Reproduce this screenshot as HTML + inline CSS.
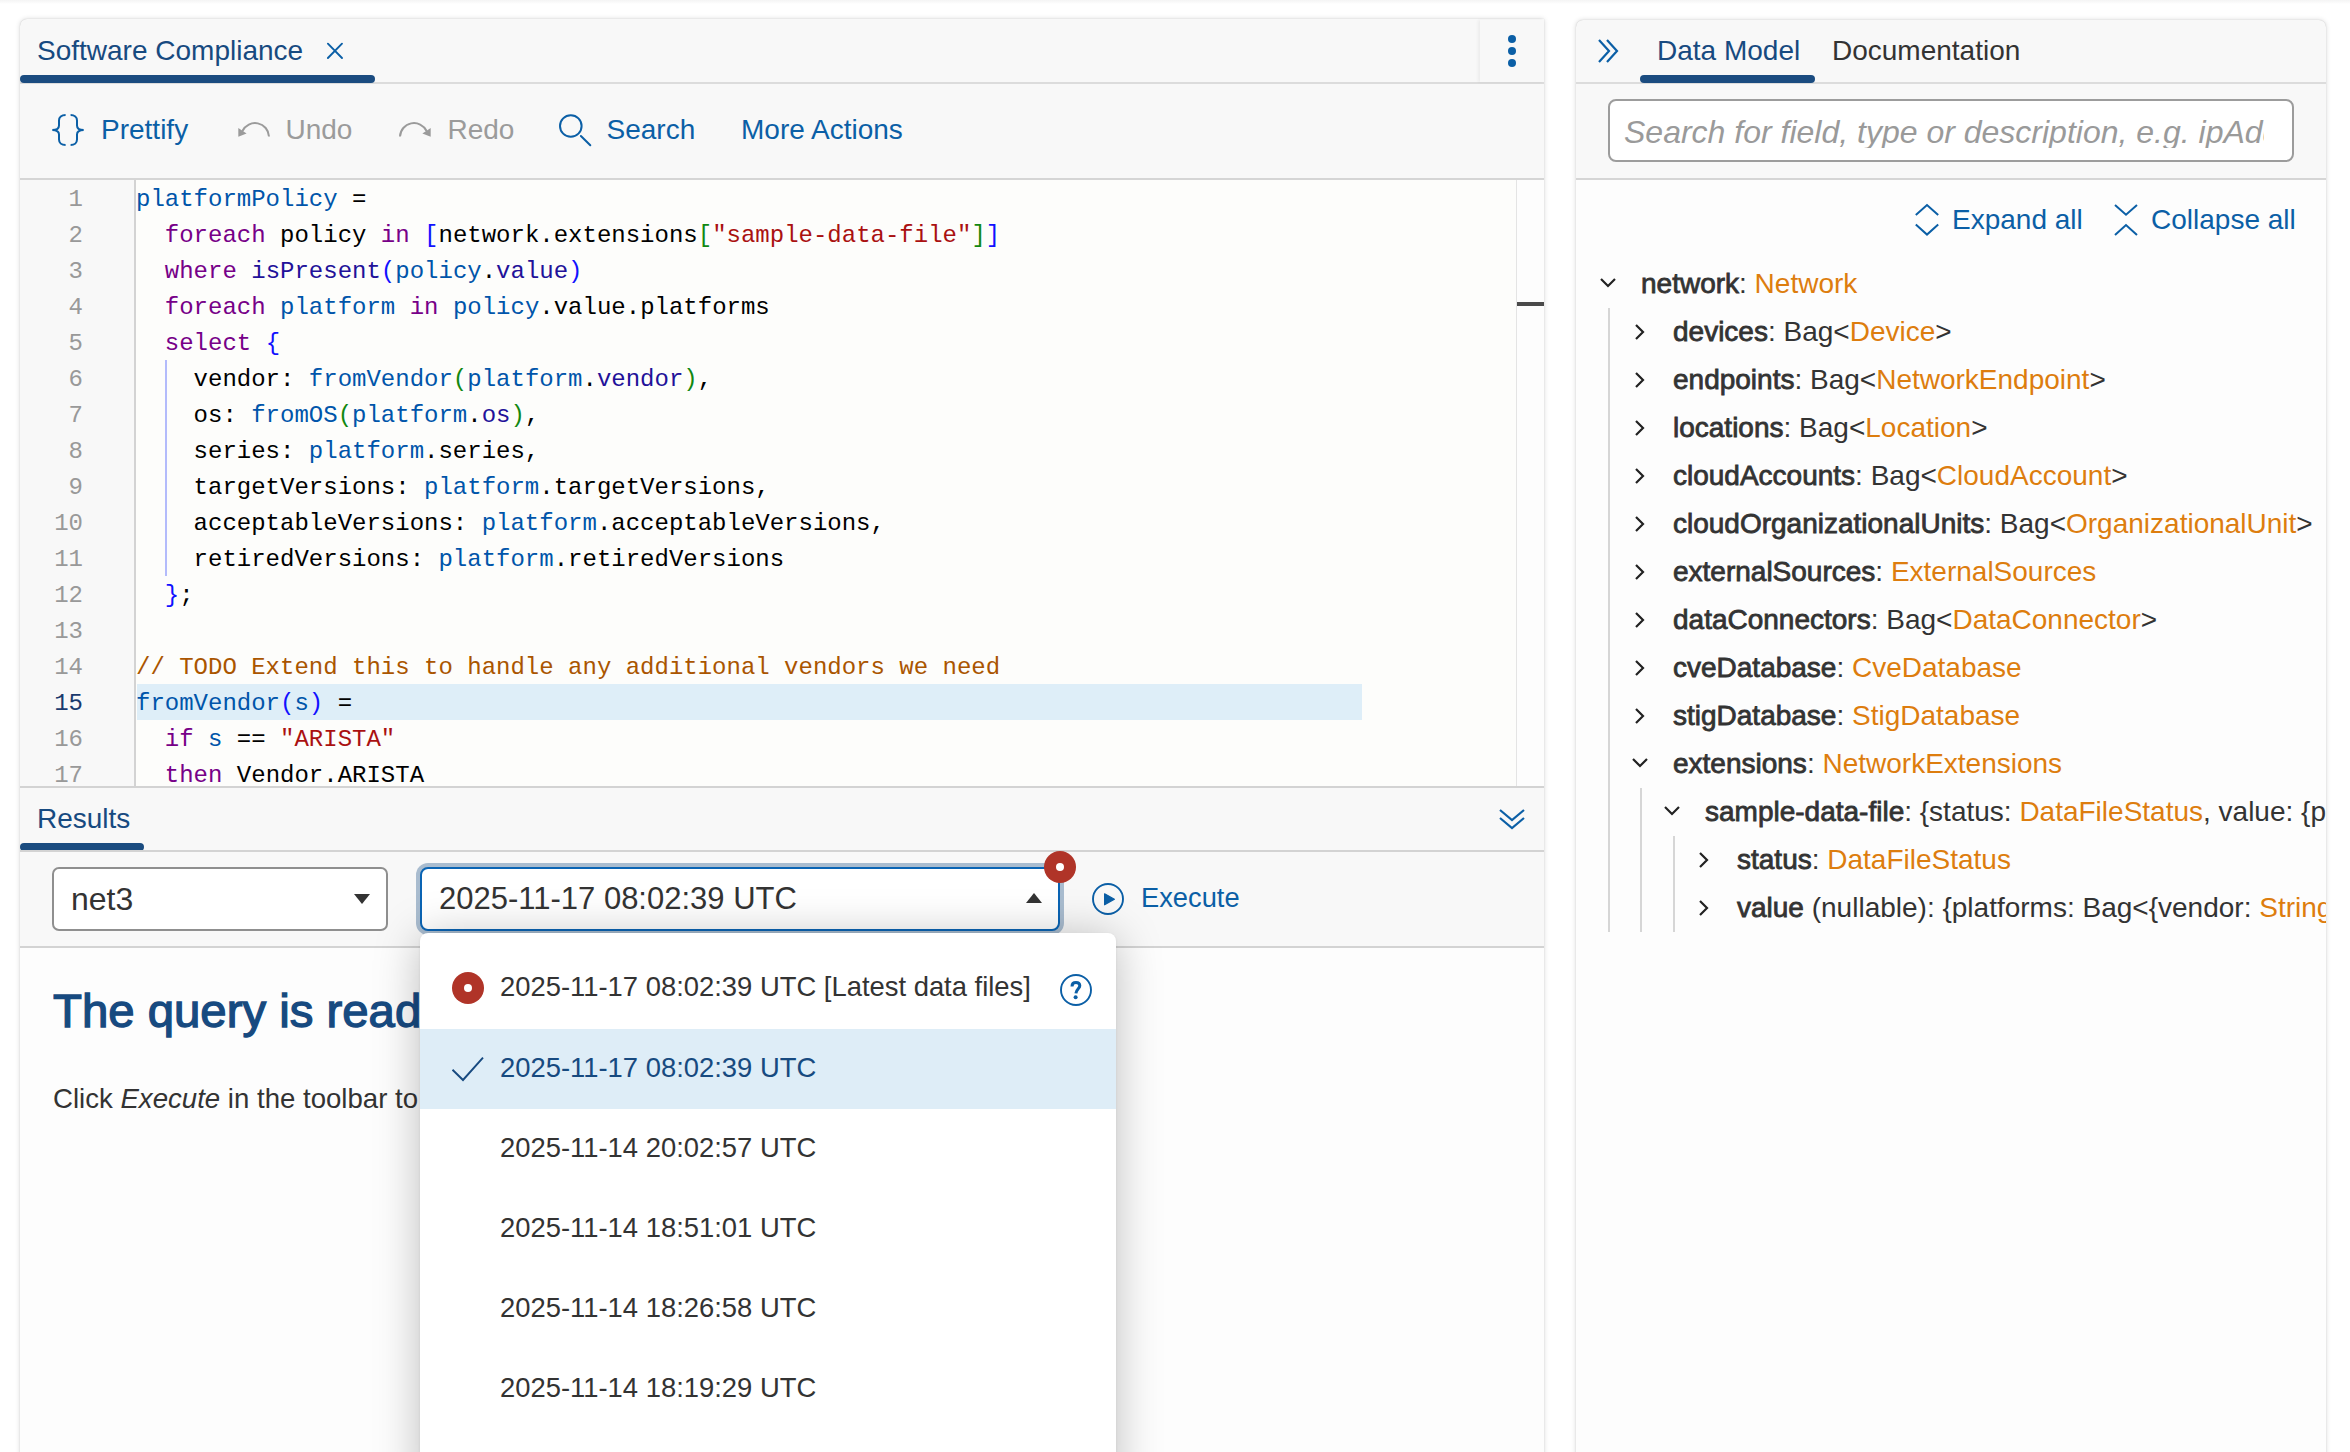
<!DOCTYPE html>
<html><head><meta charset="utf-8">
<style>
*{box-sizing:border-box;margin:0;padding:0}
html,body{width:2350px;height:1452px;overflow:hidden;background:#fff;font-family:"Liberation Sans",sans-serif;}
.abs{position:absolute}
.t{position:absolute;white-space:pre;line-height:28px;font-size:28px}
.panel{position:absolute;background:#f8f8f8;border-radius:7px 7px 0 0;box-shadow:0 0 5px rgba(0,0,0,.16),0 0 1px rgba(0,0,0,.2)}
.hl{position:absolute;background:#d8d8d8}
.blue{color:#0b5fa6}
.dblue{color:#174a80}
.gray{color:#9b9b9b}
.dark{color:#333}
.ul{position:absolute;height:8px;background:#1b4c80;border-radius:4px}
/* code */
.code{position:absolute;left:136px;top:182px;font-family:"Liberation Mono",monospace;font-size:24px;line-height:36px;color:#000;white-space:pre}
.gut{position:absolute;left:20px;top:182px;width:63px;text-align:right;font-family:"Liberation Mono",monospace;font-size:24px;line-height:36px;color:#999;white-space:pre}
.k{color:#708}.d{color:#05a}.a{color:#219}.s{color:#a11}.c{color:#a50}.b1{color:#11f}.b2{color:#181}
/* tree */
.tr{position:absolute;white-space:pre;font-size:28px;line-height:28px;color:#333}
.tr b{font-weight:400;-webkit-text-stroke:0.8px #333}
.tr i{font-style:normal;color:#dd7d0e}
.menu .it{position:absolute;left:500px;white-space:pre;font-size:27.4px;line-height:28px;color:#333}
</style></head><body>

<div class="abs" style="left:0;top:0;width:2350px;height:4px;background:linear-gradient(#f4f4f4,#fafafa 60%,#fff)"></div>
<!-- LEFT PANEL -->
<div class="panel" style="left:20px;top:19px;width:1524px;height:1440px;border-top-right-radius:0"></div>
<!-- header border -->
<div class="hl" style="left:20px;top:82px;width:1524px;height:2px;background:#dcdcdc"></div>
<div class="t dblue" style="left:37px;top:37px;">Software Compliance</div>
<svg class="abs" style="left:325px;top:41px" width="20" height="20" viewBox="0 0 20 20"><path d="M2.9 2.7L17 17M17 2.7L2.9 17" stroke="#0b5fa6" stroke-width="1.9" stroke-linecap="round" fill="none"/></svg>
<div class="ul" style="left:20px;top:75px;width:355px"></div>
<!-- kebab -->
<div class="abs" style="left:1480px;top:20px;width:64px;height:62px;background:#f8f8f8;box-shadow:-2px 0 3px rgba(0,0,0,.05);"></div>
<div class="abs" style="left:1508px;top:35px;width:8px;height:8px;border-radius:50%;background:#0b5fa6"></div>
<div class="abs" style="left:1508px;top:47px;width:8px;height:8px;border-radius:50%;background:#0b5fa6"></div>
<div class="abs" style="left:1508px;top:59px;width:8px;height:8px;border-radius:50%;background:#0b5fa6"></div>

<!-- toolbar -->
<svg class="abs" style="left:50px;top:112px" width="36" height="36" viewBox="0 0 36 36"><path d="M15.6 3 C11.5 3 9 5.3 9 8.5 V13.5 C9 16 7 18 2.3 18 C7 18 9 20 9 22.5 V27.5 C9 30.7 11.5 33 15.6 33 M20.6 3 C24.5 3 27 5.3 27 8.5 V13.5 C27 16 29 18 33.7 18 C29 18 27 20 27 22.5 V27.5 C27 30.7 24.5 33 20.6 33" stroke="#0b5fa6" stroke-width="2" fill="none"/></svg>
<div class="t blue" style="left:101px;top:116px;">Prettify</div>
<svg class="abs" style="left:236px;top:118px" width="36" height="22" viewBox="0 0 36 22"><path d="M33 18.5 A14 14 0 0 0 6.4 13" stroke="#9b9b9b" stroke-width="2" fill="none"/><path d="M2.3 10 L2.3 18.8 L10.6 15.4 Z" fill="#9b9b9b"/></svg>
<div class="t gray" style="left:285.5px;top:116px;">Undo</div>
<svg class="abs" style="left:397px;top:118px;transform:scaleX(-1)" width="36" height="22" viewBox="0 0 36 22"><path d="M33 18.5 A14 14 0 0 0 6.4 13" stroke="#9b9b9b" stroke-width="2" fill="none"/><path d="M2.3 10 L2.3 18.8 L10.6 15.4 Z" fill="#9b9b9b"/></svg>
<div class="t gray" style="left:447.5px;top:116px;">Redo</div>
<svg class="abs" style="left:557px;top:112px" width="36" height="36" viewBox="0 0 36 36"><circle cx="13.8" cy="14" r="10.8" stroke="#0b5fa6" stroke-width="2" fill="none"/><path d="M23.9 24 L33.3 33.3" stroke="#0b5fa6" stroke-width="2" stroke-linecap="round"/></svg>
<div class="t blue" style="left:606.5px;top:116px;">Search</div>
<div class="t blue" style="left:741px;top:116px;">More Actions</div>
<div class="hl" style="left:20px;top:178px;width:1524px;height:2px;background:#d5d5d5"></div>

<!-- editor -->
<div class="abs" style="left:20px;top:180px;width:114px;height:606px;background:#f8f8f8"></div>
<div class="abs" style="left:134px;top:180px;width:2px;height:606px;background:#d3d3d3"></div>
<div class="abs" style="left:136px;top:180px;width:1380px;height:606px;background:#fdfdfb"></div>
<div class="abs" style="left:1516px;top:180px;width:28px;height:606px;background:#fdfdfd;border-left:1px solid #e4e4e4"></div>
<div class="abs" style="left:1517px;top:302px;width:27px;height:4px;background:#4a4a4a"></div>
<div class="abs" style="left:137px;top:684px;width:1225px;height:36px;background:#deeef8"></div>
<div class="abs" style="left:165px;top:360px;width:2px;height:216px;background:#b3bbfb"></div>
<div class="abs" style="left:0;top:180px;width:1544px;height:606px;overflow:hidden">
<div class="gut" style="left:20px;top:2px">1
2
3
4
5
6
7
8
9
10
11
12
13
14
<span style="color:#1a3a6e">15</span>
16
17</div>
<div class="code" style="top:2px"><span class="d">platformPolicy</span> =
  <span class="k">foreach</span> policy <span class="k">in</span> <span class="b1">[</span>network.extensions<span class="b2">[</span><span class="s">"sample-data-file"</span><span class="b2">]</span><span class="b1">]</span>
  <span class="k">where</span> <span class="a">isPresent</span><span class="b1">(</span><span class="d">policy</span>.<span class="a">value</span><span class="b1">)</span>
  <span class="k">foreach</span> <span class="d">platform</span> <span class="k">in</span> <span class="d">policy</span>.value.platforms
  <span class="k">select</span> <span class="b1">{</span>
    vendor: <span class="d">fromVendor</span><span class="b2">(</span><span class="d">platform</span>.<span class="a">vendor</span><span class="b2">)</span>,
    os: <span class="d">fromOS</span><span class="b2">(</span><span class="d">platform</span>.<span class="a">os</span><span class="b2">)</span>,
    series: <span class="d">platform</span>.series,
    targetVersions: <span class="d">platform</span>.targetVersions,
    acceptableVersions: <span class="d">platform</span>.acceptableVersions,
    retiredVersions: <span class="d">platform</span>.retiredVersions
  <span class="b1">}</span>;

<span class="c">// TODO Extend this to handle any additional vendors we need</span>
<span class="d">fromVendor</span><span class="b1">(</span><span class="d">s</span><span class="b1">)</span> =
  <span class="k">if</span> <span class="d">s</span> == <span class="s">"ARISTA"</span>
  <span class="k">then</span> Vendor.ARISTA</div>
</div>
<div class="hl" style="left:20px;top:786px;width:1524px;height:2px;background:#d3d3d3"></div>

<!-- results header -->
<div class="t dblue" style="left:37px;top:805px;">Results</div>
<div class="ul" style="left:20px;top:843px;width:124px"></div>
<svg class="abs" style="left:1498px;top:806px" width="28" height="26" viewBox="0 0 28 26"><path d="M2 4 L14 14 L26 4 M2 12 L14 22 L26 12" stroke="#0b5fa6" stroke-width="2.2" fill="none"/></svg>
<div class="hl" style="left:20px;top:850px;width:1524px;height:2px;background:#d3d3d3"></div>

<!-- results toolbar -->
<div class="abs" style="left:52px;top:867px;width:336px;height:64px;background:#fff;border:2px solid #8f8f8f;border-radius:7px"></div>
<div class="abs" style="left:71px;top:883px;white-space:pre;font-size:32px;line-height:32px;color:#333">net3</div>
<svg class="abs" style="left:352px;top:893px" width="20" height="12" viewBox="0 0 20 12"><path d="M2 1 H18 L10 11 Z" fill="#333"/></svg>

<div class="abs" style="left:416px;top:863px;width:648px;height:72px;border-radius:12px;background:#a9bccf"></div>
<div class="abs" style="left:420px;top:867px;width:640px;height:64px;background:#fff;border:2px solid #0a64b4;border-radius:8px"></div>
<div class="abs" style="left:439px;top:883px;white-space:pre;font-size:31px;line-height:32px;color:#333">2025-11-17 08:02:39 UTC</div>
<svg class="abs" style="left:1024px;top:892px" width="20" height="12" viewBox="0 0 20 12"><path d="M2 11 H18 L10 1 Z" fill="#333"/></svg>
<div class="abs" style="left:1044px;top:851px;width:32px;height:32px;border-radius:50%;background:#b03428"></div>
<div class="abs" style="left:1056px;top:863px;width:8px;height:8px;border-radius:50%;background:#fff"></div>

<svg class="abs" style="left:1090px;top:881px" width="36" height="36" viewBox="0 0 36 36"><circle cx="18" cy="18" r="15" stroke="#0b5fa6" stroke-width="1.9" fill="none"/><path d="M14.6 12.8 L24.4 18.2 L14.6 23.8 Z" fill="#0b5fa6" stroke="#0b5fa6" stroke-width="1.2" stroke-linejoin="round"/></svg>
<div class="t blue" style="left:1141px;top:884px;font-size:27.3px">Execute</div>
<div class="hl" style="left:20px;top:946px;width:1524px;height:2px;background:#d3d3d3"></div>

<!-- results body -->
<div class="abs" style="left:20px;top:948px;width:1524px;height:504px;background:#fdfdfd"></div>
<div class="abs dblue" style="left:53px;top:988px;white-space:pre;font-size:45.5px;line-height:48px;font-weight:400;-webkit-text-stroke:1.3px #174a80;transform:scaleX(1.04);transform-origin:0 0">The query is ready</div>
<div class="t dark" style="left:53px;top:1085px;font-size:27.6px">Click <span style="font-style:italic">Execute</span> in the toolbar to run the query.</div>

<!-- dropdown menu -->
<div class="menu abs" style="left:0;top:0;width:2350px;height:1452px;pointer-events:none">
<div class="abs" style="left:420px;top:933px;width:696px;height:560px;background:#fff;border-radius:8px;box-shadow:0 4px 46px rgba(0,0,0,.26),0 1px 3px rgba(0,0,0,.08)"></div>
<div class="abs" style="left:452px;top:972px;width:32px;height:32px;border-radius:50%;background:#b03428"></div>
<div class="abs" style="left:464px;top:984px;width:8px;height:8px;border-radius:50%;background:#fff"></div>
<div class="it" style="top:973px">2025-11-17 08:02:39 UTC [Latest data files]</div>
<svg class="abs" style="left:1058px;top:972px" width="36" height="36" viewBox="0 0 36 36"><circle cx="18" cy="18" r="15" stroke="#0b5fa6" stroke-width="1.9" fill="none"/><path d="M14 14.4 C14 11.6 15.8 10.6 18 10.6 C20.4 10.6 21.8 12 21.8 13.8 C21.8 16.6 18.2 17 17.9 21.4" stroke="#0b5fa6" stroke-width="3" fill="none"/><circle cx="17.6" cy="25.3" r="2" fill="#0b5fa6"/></svg>
<div class="abs" style="left:420px;top:1029px;width:696px;height:80px;background:#deedf7"></div>
<svg class="abs" style="left:450px;top:1054px" width="36" height="30" viewBox="0 0 36 30"><path d="M2.5 15.7 L13 26 L33 3.6" stroke="#174a80" stroke-width="1.9" fill="none"/></svg>
<div class="it" style="top:1054px;color:#174a80">2025-11-17 08:02:39 UTC</div>
<div class="it" style="top:1134px">2025-11-14 20:02:57 UTC</div>
<div class="it" style="top:1214px">2025-11-14 18:51:01 UTC</div>
<div class="it" style="top:1294px">2025-11-14 18:26:58 UTC</div>
<div class="it" style="top:1374px">2025-11-14 18:19:29 UTC</div>
</div>

<!-- RIGHT PANEL -->
<div class="panel" style="left:1576px;top:20px;width:750px;height:1440px;"></div>
<div class="hl" style="left:1576px;top:82px;width:750px;height:2px;background:#dcdcdc"></div>
<svg class="abs" style="left:1596px;top:38px" width="26" height="26" viewBox="0 0 26 26"><path d="M3 2 L13 13 L3 24 M11 2 L21 13 L11 24" stroke="#0b5fa6" stroke-width="2.2" fill="none"/></svg>
<div class="t dblue" style="left:1657px;top:37px;">Data Model</div>
<div class="ul" style="left:1640px;top:75px;width:175px"></div>
<div class="t dark" style="left:1832px;top:37px;">Documentation</div>
<div class="abs" style="left:1608px;top:99px;width:686px;height:63px;background:#fff;border:2px solid #9c9c9c;border-radius:8px;overflow:hidden">
 <div class="abs" style="left:14px;top:14.5px;white-space:pre;font-size:32px;line-height:32px;color:#9a9a9a;font-style:italic;width:640px;overflow:hidden">Search for field, type or description, e.g. ipAddress</div>
</div>
<div class="hl" style="left:1576px;top:178px;width:750px;height:2px;background:#d5d5d5"></div>
<div class="abs" style="left:1576px;top:180px;width:750px;height:1280px;background:#fdfdfd"></div>

<svg class="abs" style="left:1913px;top:202px" width="28" height="36" viewBox="0 0 28 36"><path d="M2.8 13 L14 3 L25.2 13 M2.8 22.6 L14 32.6 L25.2 22.6" stroke="#0b5fa6" stroke-width="2" fill="none"/></svg>
<div class="t blue" style="left:1952px;top:206px;">Expand all</div>
<svg class="abs" style="left:2112px;top:202px" width="28" height="36" viewBox="0 0 28 36"><path d="M3 3 L14 12.7 L25 3 M3 33 L14 23 L25 33" stroke="#0b5fa6" stroke-width="2" fill="none"/></svg>
<div class="t blue" style="left:2151px;top:206px;">Collapse all</div>

<div class="abs" style="left:1576px;top:180px;width:750px;height:1280px;overflow:hidden" id="tree">
<svg class="abs" style="left:22px;top:96px" width="20" height="13" viewBox="0 0 20 13"><path d="M3 3 L10 10 L17 3" stroke="#222" stroke-width="2.2" fill="none"/></svg>
<div class="tr" style="left:65px;top:90.3px"><b>network</b>: <i>Network</i></div>
<svg class="abs" style="left:57px;top:142px" width="14" height="20" viewBox="0 0 14 20"><path d="M3 3 L10 10 L3 17" stroke="#222" stroke-width="2.2" fill="none"/></svg>
<div class="tr" style="left:97px;top:138.3px"><b>devices</b>: Bag&lt;<i>Device</i>&gt;</div>
<svg class="abs" style="left:57px;top:190px" width="14" height="20" viewBox="0 0 14 20"><path d="M3 3 L10 10 L3 17" stroke="#222" stroke-width="2.2" fill="none"/></svg>
<div class="tr" style="left:97px;top:186.3px"><b>endpoints</b>: Bag&lt;<i>NetworkEndpoint</i>&gt;</div>
<svg class="abs" style="left:57px;top:238px" width="14" height="20" viewBox="0 0 14 20"><path d="M3 3 L10 10 L3 17" stroke="#222" stroke-width="2.2" fill="none"/></svg>
<div class="tr" style="left:97px;top:234.3px"><b>locations</b>: Bag&lt;<i>Location</i>&gt;</div>
<svg class="abs" style="left:57px;top:286px" width="14" height="20" viewBox="0 0 14 20"><path d="M3 3 L10 10 L3 17" stroke="#222" stroke-width="2.2" fill="none"/></svg>
<div class="tr" style="left:97px;top:282.3px"><b>cloudAccounts</b>: Bag&lt;<i>CloudAccount</i>&gt;</div>
<svg class="abs" style="left:57px;top:334px" width="14" height="20" viewBox="0 0 14 20"><path d="M3 3 L10 10 L3 17" stroke="#222" stroke-width="2.2" fill="none"/></svg>
<div class="tr" style="left:97px;top:330.3px"><b>cloudOrganizationalUnits</b>: Bag&lt;<i>OrganizationalUnit</i>&gt;</div>
<svg class="abs" style="left:57px;top:382px" width="14" height="20" viewBox="0 0 14 20"><path d="M3 3 L10 10 L3 17" stroke="#222" stroke-width="2.2" fill="none"/></svg>
<div class="tr" style="left:97px;top:378.3px"><b>externalSources</b>: <i>ExternalSources</i></div>
<svg class="abs" style="left:57px;top:430px" width="14" height="20" viewBox="0 0 14 20"><path d="M3 3 L10 10 L3 17" stroke="#222" stroke-width="2.2" fill="none"/></svg>
<div class="tr" style="left:97px;top:426.3px"><b>dataConnectors</b>: Bag&lt;<i>DataConnector</i>&gt;</div>
<svg class="abs" style="left:57px;top:478px" width="14" height="20" viewBox="0 0 14 20"><path d="M3 3 L10 10 L3 17" stroke="#222" stroke-width="2.2" fill="none"/></svg>
<div class="tr" style="left:97px;top:474.3px"><b>cveDatabase</b>: <i>CveDatabase</i></div>
<svg class="abs" style="left:57px;top:526px" width="14" height="20" viewBox="0 0 14 20"><path d="M3 3 L10 10 L3 17" stroke="#222" stroke-width="2.2" fill="none"/></svg>
<div class="tr" style="left:97px;top:522.3px"><b>stigDatabase</b>: <i>StigDatabase</i></div>
<svg class="abs" style="left:54px;top:576px" width="20" height="13" viewBox="0 0 20 13"><path d="M3 3 L10 10 L17 3" stroke="#222" stroke-width="2.2" fill="none"/></svg>
<div class="tr" style="left:97px;top:570.3px"><b>extensions</b>: <i>NetworkExtensions</i></div>
<svg class="abs" style="left:86px;top:624px" width="20" height="13" viewBox="0 0 20 13"><path d="M3 3 L10 10 L17 3" stroke="#222" stroke-width="2.2" fill="none"/></svg>
<div class="tr" style="left:129px;top:618.3px"><b>sample-data-file</b>: {status: <i>DataFileStatus</i>, value: {platforms: Bag&lt;{vendor: String</div>
<svg class="abs" style="left:121px;top:670px" width="14" height="20" viewBox="0 0 14 20"><path d="M3 3 L10 10 L3 17" stroke="#222" stroke-width="2.2" fill="none"/></svg>
<div class="tr" style="left:161px;top:666.3px"><b>status</b>: <i>DataFileStatus</i></div>
<svg class="abs" style="left:121px;top:718px" width="14" height="20" viewBox="0 0 14 20"><path d="M3 3 L10 10 L3 17" stroke="#222" stroke-width="2.2" fill="none"/></svg>
<div class="tr" style="left:161px;top:714.3px"><b>value</b> (nullable): {platforms: Bag&lt;{vendor: <i>String</i>, os: String}&gt;}</div>
<div class="abs" style="left:32px;top:128px;width:2px;height:624px;background:#d6d6d6"></div>
<div class="abs" style="left:64px;top:608px;width:2px;height:144px;background:#d6d6d6"></div>
<div class="abs" style="left:96.5px;top:656px;width:2px;height:96px;background:#d6d6d6"></div>
</div>

</body></html>
